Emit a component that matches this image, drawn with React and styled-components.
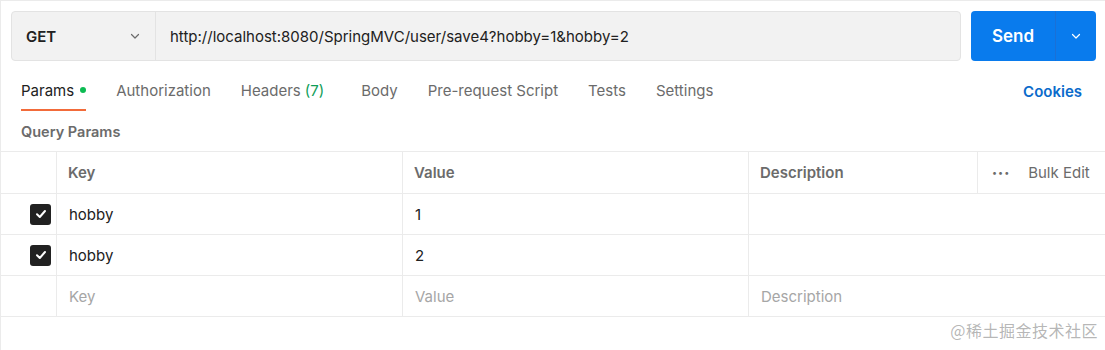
import React from "react";
import styled, { createGlobalStyle } from "styled-components";

const GlobalStyle = createGlobalStyle`
  html, body {
    margin: 0;
    padding: 0;
    background: #ffffff;
  }
  body {
    font-family: Inter, "Noto Sans", "Noto Sans CJK SC", sans-serif;
    color: #212121;
  }
`;

const tabs = [
  { label: "Params", active: true, dot: true },
  { label: "Authorization" },
  { label: "Headers", count: "(7)" },
  { label: "Body" },
  { label: "Pre-request Script" },
  { label: "Tests" },
  { label: "Settings" },
];

const rows = [
  { key: "hobby", value: "1" },
  { key: "hobby", value: "2" },
];

function Chevron({ color = "#6b6b6b" }) {
  return (
    <svg width="12" height="12" viewBox="0 0 12 12" fill="none">
      <path d="M2.5 4.5L6 8L9.5 4.5" stroke={color} strokeWidth="1.2" strokeLinecap="round" strokeLinejoin="round" />
    </svg>
  );
}

function CheckBox() {
  return (
    <Box>
      <svg width="14" height="14" viewBox="0 0 14 14" fill="none">
        <path d="M3 7.3L5.8 10L11 4" stroke="#ffffff" strokeWidth="2" strokeLinecap="round" strokeLinejoin="round" />
      </svg>
    </Box>
  );
}

export default function App() {
  return (
    <Page>
      <GlobalStyle />
      <RequestBar>
        <UrlGroup>
          <Method>
            <span>GET</span>
            <Chevron />
          </Method>
          <Url>http://localhost:8080/SpringMVC/user/save4?hobby=1&amp;hobby=2</Url>
        </UrlGroup>
        <SendButton>
          <SendLabel>Send</SendLabel>
          <SendArrow>
            <Chevron color="#ffffff" />
          </SendArrow>
        </SendButton>
      </RequestBar>

      <TabBar>
        <TabList>
          {tabs.map((t) => (
            <Tab key={t.label} $active={t.active}>
              {t.label}
              {t.count && <Count>{t.count}</Count>}
              {t.dot && <Dot />}
            </Tab>
          ))}
        </TabList>
        <Cookies>Cookies</Cookies>
      </TabBar>

      <SectionTitle>Query Params</SectionTitle>

      <Table>
        <HeadCell />
        <HeadCell>Key</HeadCell>
        <HeadCell>Value</HeadCell>
        <HeadCell>Description</HeadCell>
        <BulkCell>
          <Dots>•••</Dots>
          Bulk Edit
        </BulkCell>

        {rows.map((r, i) => (
          <React.Fragment key={i}>
            <CheckCell>
              <CheckBox />
            </CheckCell>
            <Cell>{r.key}</Cell>
            <Cell>{r.value}</Cell>
            <Cell $span={2} />
          </React.Fragment>
        ))}

        <CheckCell />
        <Cell $placeholder>Key</Cell>
        <Cell $placeholder>Value</Cell>
        <Cell $placeholder $span={2}>Description</Cell>
      </Table>

      <Watermark>@稀土掘金技术社区</Watermark>
    </Page>
  );
}

const Page = styled.div`
  position: relative;
  width: 1105px;
  height: 350px;
  box-sizing: border-box;
  border-top: 1px solid #ebebeb;
  border-left: 1px solid #ebebeb;
  overflow: hidden;
`;

const RequestBar = styled.div`
  display: flex;
  gap: 10px;
  padding: 10px 9px 0 10px;
  height: 50px;
`;

const UrlGroup = styled.div`
  flex: 1;
  display: flex;
  background: #f2f2f2;
  border: 1px solid #e3e3e3;
  border-radius: 4px;
`;

const Method = styled.div`
  width: 144px;
  box-sizing: border-box;
  display: flex;
  align-items: center;
  justify-content: space-between;
  padding: 0 14px 0 14px;
  border-right: 1px solid #e3e3e3;
  font-size: 15px;
  font-weight: 600;
  color: #212121;
`;

const Url = styled.div`
  display: flex;
  align-items: center;
  padding-left: 14px;
  font-size: 15px;
  color: #212121;
`;

const SendButton = styled.div`
  width: 125px;
  display: flex;
  background: #097bed;
  border-radius: 4px;
  color: #ffffff;
`;

const SendLabel = styled.div`
  flex: 1;
  display: flex;
  align-items: center;
  justify-content: center;
  font-size: 17px;
  font-weight: 600;
  border-right: 1px solid #1a70d6;
`;

const SendArrow = styled.div`
  width: 40px;
  display: flex;
  align-items: center;
  justify-content: center;
`;

const TabBar = styled.div`
  display: flex;
  justify-content: space-between;
  align-items: flex-start;
  padding: 0 23px 0 20px;
  margin-top: 10px;
`;

const TabList = styled.div`
  display: flex;
  gap: 30px;
`;

const Tab = styled.div`
  display: flex;
  align-items: center;
  height: 40px;
  box-sizing: border-box;
  font-size: 15px;
  color: ${(p) => (p.$active ? "#212121" : "#6b6b6b")};
  border-bottom: 2px solid ${(p) => (p.$active ? "#f26b3a" : "transparent")};
`;

const Count = styled.span`
  margin-left: 4px;
  margin-right: 7px;
  color: #0f9d58;
`;

const Dot = styled.span`
  width: 6px;
  height: 6px;
  margin-left: 6px;
  border-radius: 50%;
  background: #0cbb52;
`;

const Cookies = styled.div`
  height: 40px;
  display: flex;
  align-items: center;
  font-size: 15px;
  font-weight: 600;
  color: #0b6bcb;
`;

const SectionTitle = styled.div`
  display: flex;
  align-items: center;
  padding-left: 20px;
  height: 40px;
  font-size: 14.5px;
  font-weight: 600;
  color: #6b6b6b;
`;

const Table = styled.div`
  display: grid;
  grid-template-columns: 56px 346px 346px 229px 1fr;
  grid-template-rows: 42px;
  grid-auto-rows: 41px;
  border-top: 1px solid #ebebeb;
`;

const HeadCell = styled.div`
  display: flex;
  align-items: center;
  padding-left: 11px;
  font-size: 15px;
  font-weight: 600;
  color: #6b6b6b;
  border-right: 1px solid #ebebeb;
  border-bottom: 1px solid #ebebeb;
`;

const BulkCell = styled.div`
  display: flex;
  align-items: center;
  padding-left: 14px;
  font-size: 15px;
  color: #6b6b6b;
  border-bottom: 1px solid #ebebeb;
`;

const Dots = styled.span`
  font-size: 9px;
  letter-spacing: 1px;
  margin-right: 18px;
  color: #6b6b6b;
`;

const CheckCell = styled.div`
  display: flex;
  align-items: center;
  justify-content: flex-end;
  padding-right: 5px;
  border-right: 1px solid #ebebeb;
  border-bottom: 1px solid #ebebeb;
`;

const Box = styled.div`
  width: 21px;
  height: 21px;
  border-radius: 3px;
  background: #212121;
  display: flex;
  align-items: center;
  justify-content: center;
`;

const Cell = styled.div`
  display: flex;
  align-items: center;
  padding-left: 12px;
  font-size: 15px;
  grid-column: ${(p) => (p.$span ? `span ${p.$span}` : "auto")};
  color: ${(p) => (p.$placeholder ? "#a6a6a6" : "#212121")};
  border-right: ${(p) => (p.$span ? "none" : "1px solid #ebebeb")};
  border-bottom: 1px solid #ebebeb;
`;

const Watermark = styled.div`
  position: absolute;
  right: 7px;
  bottom: 8px;
  font-family: "Noto Sans CJK SC", sans-serif;
  font-size: 16px;
  color: rgba(120, 120, 120, 0.55);
  letter-spacing: 0.5px;
`;
